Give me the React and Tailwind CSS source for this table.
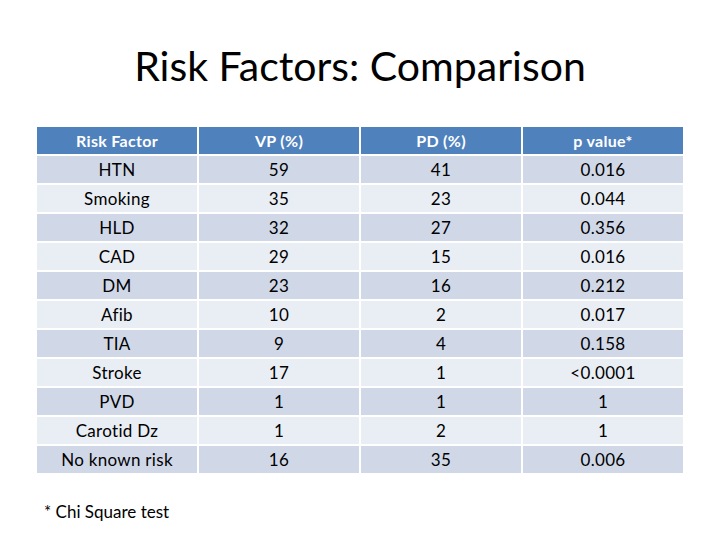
const rows = [
  ['HTN', '59', '41', '0.016'],
  ['Smoking', '35', '23', '0.044'],
  ['HLD', '32', '27', '0.356'],
  ['CAD', '29', '15', '0.016'],
  ['DM', '23', '16', '0.212'],
  ['Afib', '10', '2', '0.017'],
  ['TIA', '9', '4', '0.158'],
  ['Stroke', '17', '1', '<0.0001'],
  ['PVD', '1', '1', '1'],
  ['Carotid Dz', '1', '2', '1'],
  ['No known risk', '16', '35', '0.006'],
];

const headers = ['Risk Factor', 'VP (%)', 'PD (%)', 'p value*'];

export default function App() {
  return (
    <div className="w-[720px] h-[540px] bg-white overflow-hidden" style={{ fontFamily: 'Lato, "Open Sans", sans-serif' }}>
      <h1 className="pt-[40px] h-[127px] text-center text-[41px] leading-[52px] text-black">Risk Factors: Comparison</h1>
      <div className="ml-[37px] w-[646px] grid grid-cols-4 gap-[2px]">
        {headers.map((h) => (
          <div key={h} className="h-[27px] flex items-center justify-center bg-[#4f81bd] text-white font-bold text-[16px] tracking-[0.3px]">{h}</div>
        ))}
        {rows.map((row, i) =>
          row.map((cell, j) => (
            <div
              key={`${i}-${j}`}
              className={`h-[27px] flex items-center justify-center text-[17px] text-black tracking-[0.3px] ${i % 2 === 0 ? 'bg-[#d0d8e8]' : 'bg-[#e9edf4]'}`}
            >
              {cell}
            </div>
          ))
        )}
      </div>
      <p className="mt-[26px] ml-[44px] text-[17px] text-black">* Chi Square test</p>
    </div>
  );
}
